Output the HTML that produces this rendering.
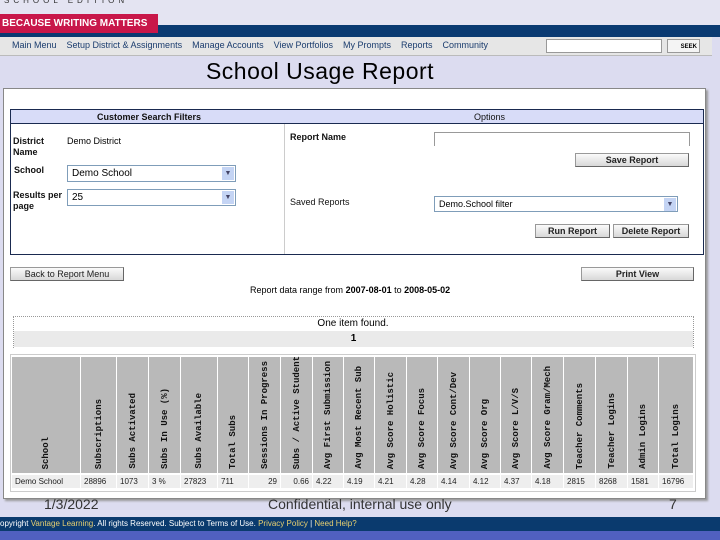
<!DOCTYPE html><html><head><style>
*{margin:0;padding:0;box-sizing:border-box}
body{width:720px;height:540px;overflow:hidden;background:#dcdcf0;font-family:"Liberation Sans",sans-serif;position:relative}
.a{position:absolute}
.btn{position:absolute;background:linear-gradient(#fafafa,#d8d8d8);border:1px solid #999;border-right-color:#666;border-bottom-color:#666;font-size:9px;font-weight:bold;text-align:center;line-height:12px;color:#222}
.sel{position:absolute;background:#fff;border:1px solid #7f9db9;font-size:10px;padding-left:4px;line-height:15px}
.sel i{position:absolute;right:1px;top:1px;width:12px;height:13px;background:#c4d4f4;font-style:normal;font-size:7px;color:#446;text-align:center;line-height:13px}
.lab{position:absolute;font-size:9px;font-weight:bold;color:#111;line-height:11px}
.hc{position:absolute;top:357px;height:116px;background:#b9b9b9}
.hc span{position:absolute;left:50%;bottom:4px;writing-mode:vertical-rl;transform:translateX(-50%) rotate(180deg);font-family:"Liberation Mono",monospace;font-weight:bold;font-size:9px;color:#111;white-space:nowrap}
.dc{position:absolute;top:475px;height:13px;background:#eee;font-size:8px;color:#222;line-height:13px;padding-left:3px}
</style></head><body>
<div class="a" style="left:0;top:0;width:720px;height:30px;background:#e4e4f2"></div>
<div class="a" style="left:4px;top:-4px;font-size:8px;letter-spacing:4px;color:#333">SCHOOL EDITION</div>
<div class="a" style="left:0;top:25px;width:720px;height:12px;background:#0a3a72"></div>
<div class="a" style="left:0;top:14px;width:158px;height:19px;background:#c8174a;color:#fff;font-size:10px;font-weight:bold;line-height:19px;padding-left:2px">BECAUSE WRITING MATTERS</div>
<div class="a" style="left:0;top:37px;width:712px;height:19px;background:#e6e6e6;border-bottom:1px solid #bbb"></div>
<div class="a" style="left:12px;top:40px;font-size:9px;color:#1a3c6e;white-space:nowrap">Main Menu &nbsp;&nbsp; Setup District &amp; Assignments &nbsp;&nbsp; Manage Accounts &nbsp;&nbsp; View Portfolios &nbsp;&nbsp; My Prompts &nbsp;&nbsp; Reports &nbsp;&nbsp; Community</div>
<div class="a" style="left:546px;top:39px;width:116px;height:14px;background:#fff;border:1px solid #999"></div>
<div class="a" style="left:667px;top:39px;width:33px;height:14px;background:#f4f4f4;border:1px solid #999;font-size:6px;font-weight:bold;text-align:right;padding-right:2px;line-height:14px">SEEK</div>
<div class="a" style="left:0;top:58px;width:640px;text-align:center;font-size:23px;color:#000;letter-spacing:0.5px">School Usage Report</div>
<div class="a" style="left:3px;top:88px;width:703px;height:411px;background:#fff;border:1px solid #888;box-shadow:2px 2px 2px #999"></div>
<div class="a" style="left:10px;top:109px;width:694px;height:146px;border:1px solid #1a2a50"></div>
<div class="a" style="left:11px;top:110px;width:692px;height:14px;background:#d8dcf8;border-bottom:1px solid #1a2a50"></div>
<div class="a" style="left:284px;top:124px;width:1px;height:130px;background:#ccc"></div>
<div class="lab" style="left:97px;top:112px">Customer Search Filters</div>
<div class="lab" style="left:474px;top:112px;font-weight:normal">Options</div>
<div class="lab" style="left:13px;top:136px">District<br>Name</div>
<div class="a" style="left:67px;top:136px;font-size:9px">Demo District</div>
<div class="lab" style="left:14px;top:165px">School</div>
<div class="sel" style="left:67px;top:165px;width:169px;height:17px">Demo School<i>▼</i></div>
<div class="lab" style="left:13px;top:190px">Results per<br>page</div>
<div class="sel" style="left:67px;top:189px;width:169px;height:17px">25<i>▼</i></div>
<div class="lab" style="left:290px;top:132px">Report Name</div>
<div class="a" style="left:434px;top:132px;width:256px;height:14px;border:1px solid #999;border-bottom:none"></div>
<div class="btn" style="left:575px;top:153px;width:114px;height:14px">Save Report</div>
<div class="lab" style="left:290px;top:197px;font-weight:normal">Saved Reports</div>
<div class="sel" style="left:434px;top:196px;width:244px;height:16px;font-size:9px">Demo.School filter<i>▼</i></div>
<div class="btn" style="left:535px;top:224px;width:75px;height:14px">Run Report</div>
<div class="btn" style="left:613px;top:224px;width:76px;height:14px">Delete Report</div>
<div class="btn" style="left:10px;top:267px;width:114px;height:14px;font-weight:normal">Back to Report Menu</div>
<div class="btn" style="left:581px;top:267px;width:113px;height:14px">Print View</div>
<div class="a" style="left:250px;top:285px;font-size:9px">Report data range from <b>2007-08-01</b> to <b>2008-05-02</b></div>
<div class="a" style="left:13px;top:316px;width:681px;height:32px;border:1px dotted #999;border-bottom:none"></div>
<div class="a" style="left:0;top:318px;width:706px;text-align:center;font-size:10px">One item found.</div>
<div class="a" style="left:14px;top:331px;width:679px;height:16px;background:#eaeaea;text-align:center;font-size:10px;font-weight:bold;line-height:16px">1</div>
<div class="a" style="left:10px;top:354px;width:686px;height:138px;border:1px solid #ccc"></div>
<div class="hc" style="left:12px;width:68px"><span>School</span></div>
<div class="hc" style="left:81px;width:35px"><span>Subscriptions</span></div>
<div class="hc" style="left:117px;width:31px"><span>Subs Activated</span></div>
<div class="hc" style="left:149px;width:31px"><span>Subs In Use (%)</span></div>
<div class="hc" style="left:181px;width:36px"><span>Subs Available</span></div>
<div class="hc" style="left:218px;width:30px"><span>Total Subs</span></div>
<div class="hc" style="left:249px;width:31px"><span>Sessions In Progress</span></div>
<div class="hc" style="left:281px;width:31px"><span>Subs / Active Student</span></div>
<div class="hc" style="left:313px;width:30px"><span>Avg First Submission</span></div>
<div class="hc" style="left:344px;width:30px"><span>Avg Most Recent Sub</span></div>
<div class="hc" style="left:375px;width:31px"><span>Avg Score Holistic</span></div>
<div class="hc" style="left:407px;width:30px"><span>Avg Score Focus</span></div>
<div class="hc" style="left:438px;width:31px"><span>Avg Score Cont/Dev</span></div>
<div class="hc" style="left:470px;width:30px"><span>Avg Score Org</span></div>
<div class="hc" style="left:501px;width:30px"><span>Avg Score L/V/S</span></div>
<div class="hc" style="left:532px;width:31px"><span>Avg Score Gram/Mech</span></div>
<div class="hc" style="left:564px;width:31px"><span>Teacher Comments</span></div>
<div class="hc" style="left:596px;width:31px"><span>Teacher Logins</span></div>
<div class="hc" style="left:628px;width:30px"><span>Admin Logins</span></div>
<div class="hc" style="left:659px;width:34px"><span>Total Logins</span></div>
<div class="dc" style="left:12px;width:68px">Demo School</div>
<div class="dc" style="left:81px;width:35px">28896</div>
<div class="dc" style="left:117px;width:31px">1073</div>
<div class="dc" style="left:149px;width:31px">3 %</div>
<div class="dc" style="left:181px;width:36px">27823</div>
<div class="dc" style="left:218px;width:30px">711</div>
<div class="dc" style="left:249px;width:31px;text-align:right;padding-right:3px">29</div>
<div class="dc" style="left:281px;width:31px;text-align:right;padding-right:3px">0.66</div>
<div class="dc" style="left:313px;width:30px">4.22</div>
<div class="dc" style="left:344px;width:30px">4.19</div>
<div class="dc" style="left:375px;width:31px">4.21</div>
<div class="dc" style="left:407px;width:30px">4.28</div>
<div class="dc" style="left:438px;width:31px">4.14</div>
<div class="dc" style="left:470px;width:30px">4.12</div>
<div class="dc" style="left:501px;width:30px">4.37</div>
<div class="dc" style="left:532px;width:31px">4.18</div>
<div class="dc" style="left:564px;width:31px">2815</div>
<div class="dc" style="left:596px;width:31px">8268</div>
<div class="dc" style="left:628px;width:30px">1581</div>
<div class="dc" style="left:659px;width:34px">16796</div>
<div class="a" style="left:44px;top:496px;font-size:14px;color:#333">1/3/2022</div>
<div class="a" style="left:268px;top:496px;font-size:14px;color:#333">Confidential, internal use only</div>
<div class="a" style="left:669px;top:496px;font-size:14px;color:#333">7</div>
<div class="a" style="left:0;top:517px;width:720px;height:14px;background:#0a3a6e;color:#fff;font-size:8px;line-height:14px;white-space:nowrap">opyright <span style="color:#e8d070">Vantage Learning</span>. All rights Reserved. Subject to Terms of Use. <span style="color:#e8d070">Privacy Policy</span> | <span style="color:#e8d070">Need Help?</span></div>
<div class="a" style="left:0;top:531px;width:720px;height:9px;background:#5060c0"></div>
</body></html>
